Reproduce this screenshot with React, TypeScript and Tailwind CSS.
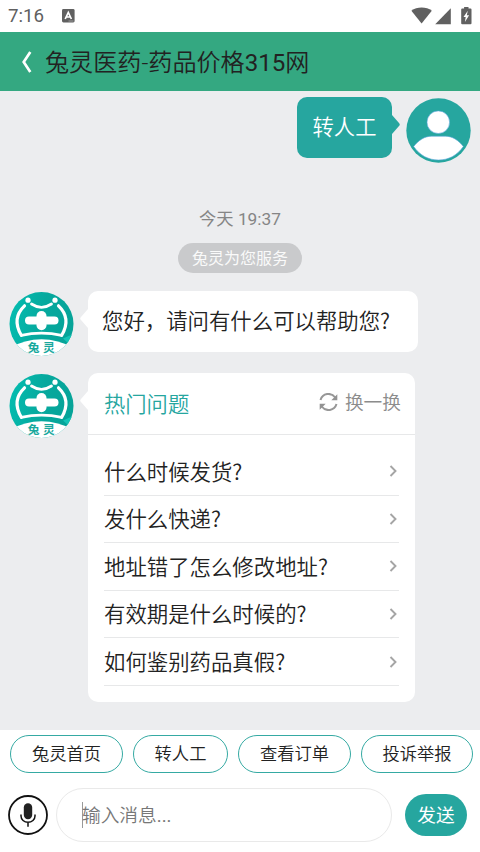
import type { ReactNode } from 'react';

const questions = [
  '什么时候发货?',
  '发什么快递?',
  '地址错了怎么修改地址?',
  '有效期是什么时候的?',
  '如何鉴别药品真假?',
];

const quickActions = [
  { label: '兔灵首页', width: 'w-[113px]' },
  { label: '转人工', width: 'w-[95px]' },
  { label: '查看订单', width: 'w-[113px]' },
  { label: '投诉举报', width: 'w-[112px]' },
];

function StatusBar() {
  return (
    <div className="flex h-8 shrink-0 items-center justify-between bg-white pl-2 pr-[8px] text-[#606060]">
      <div className="flex items-center">
        <span className="w-[54px] text-[18.7px] leading-8">7:16</span>
        <svg width="13" height="14" viewBox="0 0 13 14">
          <rect width="12.6" height="13.4" rx="1.4" fill="#606060" />
          <path d="M3.2 10 6.3 3.5 9.4 10M4.3 8h4" fill="none" stroke="#fff" strokeWidth="1.7" />
          <path d="M6.5 12h5" stroke="#aaa" strokeWidth=".8" />
        </svg>
      </div>
      <svg width="62" height="20" viewBox="410 6 62 20" fill="#606060">
        <path d="M411.4 10.7c5.5-4.4 15-4.4 20.4 0L421.6 23.6z" />
        <path d="M450.8 8.2V24.2H435.2z" />
        <path d="M464.1 7h4.4v1.6h2a1 1 0 0 1 1 1v13.6a1 1 0 0 1-1 1h-8.3a1 1 0 0 1-1-1V9.6a1 1 0 0 1 1-1h1.9z" />
        <path d="m467.8 10.8-4.3 6.2h2.2l-.8 5 4.2-6.7h-2.3z" fill="#fff" />
      </svg>
    </div>
  );
}

function Header() {
  return (
    <header className="flex h-[59px] shrink-0 items-center bg-[#34a881] pl-[21px] text-[24.1px] text-[#222]">
      <svg className="mr-[13px]" width="11" height="22" viewBox="0 0 11 22">
        <path d="M9.3 1 2.7 11l6.6 10" fill="none" stroke="#fff" strokeWidth="2.7" />
      </svg>
      <h1 className="pt-[3px] font-[350]">兔灵医药-药品价格<span className="font-normal">315</span>网</h1>
    </header>
  );
}

function UserAvatar() {
  return (
    <svg className="mt-px shrink-0" width="65" height="65" viewBox="0 0 65 65">
      <circle cx="32.5" cy="32.5" r="32.2" fill="#26a69f" />
      <g fill="#fff" stroke="#5aa5dc" strokeWidth=".6">
        <circle cx="32.3" cy="24.2" r="11.3" />
        <path d="M7.7 48.5c5-6.5 11-10.3 18-10.3h13.6c7 0 13 3.8 18 10.3C51 57.5 42.5 62 32.5 62S14 57.5 7.7 48.5z" />
      </g>
    </svg>
  );
}

function AgentAvatar() {
  return (
    <svg className="shrink-0" width="65" height="65" viewBox="0 0 65 65">
      <defs>
        <linearGradient id="badge" x1="0" y1="0.3" x2="1" y2="0.5">
          <stop offset="0" stopColor="#04bdb0" />
          <stop offset=".5" stopColor="#06a99e" />
          <stop offset="1" stopColor="#06a398" />
        </linearGradient>
        <clipPath id="disc">
          <circle cx="32.5" cy="32" r="32" />
        </clipPath>
      </defs>
      <g clipPath="url(#disc)">
        <rect width="65" height="65" fill="url(#badge)" />
        <path d="M54 46.5c4-1.8 7-3.5 11-4v14z" fill="#13c4b6" />
        <path d="M0 56Q32.5 38.5 65 56V65H0z" fill="#fff" />
      </g>
      <g fill="none" stroke="#fff" strokeLinecap="round">
        <path d="M15.5 13.8C6.3 22.5 6.3 33 12.3 43.3" strokeWidth="3.2" />
        <path d="M49.5 13.8C58.7 22.5 58.7 33 52.7 43.3" strokeWidth="3.2" />
        <path d="M12.3 43.3Q32.5 39 52.7 43.3" strokeWidth="2.8" />
        <path d="M22.5 12Q32.5 18.6 42.5 12" strokeWidth="2.8" />
        <path d="M20 28.4H45.5" strokeWidth="8" />
        <path d="M32.5 24v9.2" strokeWidth="10" />
      </g>
      <g fill="#fff">
        <circle cx="19" cy="8.2" r="2.6" />
        <circle cx="46" cy="8.2" r="2.6" />
      </g>
      <g fill="#18a89d" fontSize="11.8" fontWeight="700">
        <text x="18.7" y="60.2">兔</text>
        <text x="34" y="60.2">灵</text>
      </g>
    </svg>
  );
}

function AgentMessage({ children, className }: { children: ReactNode; className: string }) {
  return (
    <div className="flex items-start pl-[9px]">
      <div className="mt-px"><AgentAvatar /></div>
      <svg className="ml-[6px] mt-[18px] shrink-0" width="8" height="19" viewBox="0 0 8 19">
        <path d="M8 0v19L.8 10.8q-1.1-1.3 0-2.6z" fill="#fff" />
      </svg>
      <div className={`bg-white ${className}`}>{children}</div>
    </div>
  );
}

function HotQuestions() {
  return (
    <>
      <div className="flex h-[62px] items-center justify-between border-b border-[#e7e8e9] pl-4 pr-[14px]">
        <h2 className="pt-[3px] text-[21.3px] font-[350] text-[#26a69f]">热门问题</h2>
        <button className="flex items-center gap-[7px] pb-[3px] text-[18.7px] text-[#8c8c8c]">
          <svg width="19" height="18" viewBox="0 0 19 18">
            <g fill="none" stroke="#979797" strokeWidth="2">
              <path d="M1.5 7C3.5.3 12-1.2 16.3 4.5" />
              <path d="M17.5 11C15.5 17.7 7 19.2 2.7 13.5" />
            </g>
            <path d="M18.3 1.2v6h-6z" fill="#929292" />
            <path d="M.7 16.8v-6h6z" fill="#929292" />
          </svg>
          <span className="relative top-px font-[350]">换一换</span>
        </button>
      </div>
      <ul className="px-4 pt-[13px]">
        {questions.map(q => (
          <li key={q} className="flex h-[47.6px] items-center justify-between border-b border-[#e7e8e9] text-[21.4px] text-[#222]">
            <span className="pb-[2px] font-['Noto_Sans_CJK_SC',sans-serif] font-[350]">{q}</span>
            <svg width="10" height="14" viewBox="0 0 10 14">
              <path d="m1.5 2 5 5-5 5" fill="none" stroke="#a5a5a5" strokeWidth="1.9" />
            </svg>
          </li>
        ))}
      </ul>
    </>
  );
}

function Composer() {
  return (
    <div className="mt-[15px] flex items-center pl-2">
      <svg width="40" height="42" viewBox="0 0 40 42">
        <g fill="none" stroke="#111">
          <circle cx="20" cy="21" r="19" strokeWidth="1.8" />
          <path d="M13 20.5v1.5a7 6.3 0 0 0 14 0v-1.5M20 28.3v4.5" strokeWidth="1.5" />
        </g>
        <rect x="15.8" y="9.3" width="8.4" height="16" rx="4.2" fill="#222" />
      </svg>
      <div className="ml-[8px] flex h-[54px] w-[336px] items-center rounded-full border border-[#e9e9e9] pl-[25px] text-[18.7px] text-[#777]">
        <span className="-mr-px h-[26px] w-px bg-[#999]" />
        <span className="pt-[2px] font-[350]">输入消息<span className="font-normal">...</span></span>
      </div>
      <button className="ml-[13px] h-[42px] w-[62px] rounded-full bg-[#26a69f] pt-[2px] text-[18.7px] text-white">发送</button>
    </div>
  );
}

export default function App() {
  return (
    <div className="flex h-[852px] w-[480px] flex-col overflow-hidden bg-white font-[Roboto,'Noto_Sans_CJK_SC',sans-serif] leading-none">
      <StatusBar />
      <Header />
      <main className="h-[639px] shrink-0 bg-[#ecedef] pt-[6px]">
        <div className="flex items-start justify-end pr-[9px]">
          <div className="flex h-[61px] w-[95px] items-center justify-center rounded-[10px] bg-[#26a69f] text-[21.3px] font-[350] text-white">转人工</div>
          <svg className="mr-[6px] mt-[18px]" width="8" height="19" viewBox="0 0 8 19">
            <path d="M0 0v19l7.2-8.2q1.1-1.3 0-2.6z" fill="#26a69f" />
          </svg>
          <UserAvatar />
        </div>
        <div className="mt-[47px] flex flex-col items-center">
          <time className="h-[33px] text-[17.3px] leading-[18px] text-[#858585]">今天 19:37</time>
          <span className="flex h-[30px] w-[124px] items-center justify-center rounded-full bg-[#c9cacc] pt-[2px] text-base text-[#fafafa]">兔灵为您服务</span>
        </div>
        <div className="mt-[18px] flex flex-col gap-[16px]">
          <AgentMessage className="flex h-[61px] w-[330px] items-center rounded-[10px] pb-[4px] pl-[14px] font-['Noto_Sans_CJK_SC',sans-serif] text-[21.4px] font-[350] text-[#222]">
            您好，请问有什么可以帮助您?
          </AgentMessage>
          <AgentMessage className="h-[329px] w-[327px] rounded-[10px]">
            <HotQuestions />
          </AgentMessage>
        </div>
      </main>
      <footer className="h-[122px] pt-[5px]">
        <div className="flex gap-[10px] pl-[10px]">
          {quickActions.map(a => (
            <button key={a.label} className={`h-[38px] shrink-0 rounded-full border-[1.5px] border-[#35aaa3] pt-[2px] text-[17.3px] font-[350] text-[#222] ${a.width}`}>
              {a.label}
            </button>
          ))}
        </div>
        <Composer />
      </footer>
    </div>
  );
}
